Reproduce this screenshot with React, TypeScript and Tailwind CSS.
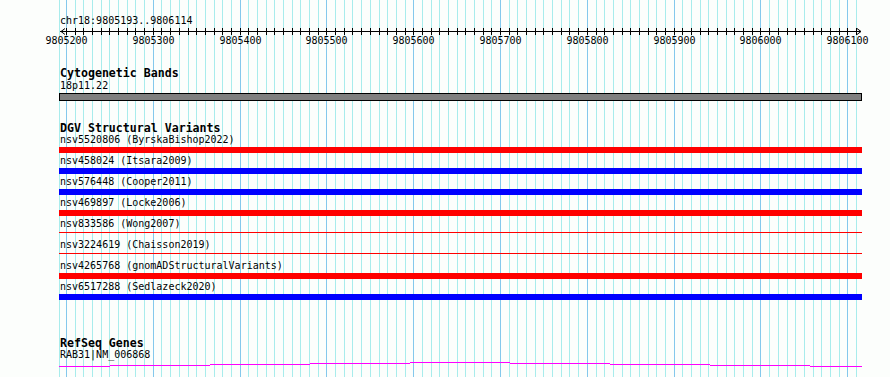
import React from "react";

// view: 9805193..9806114, 10bp grid starting at 9805200 (x=66)
const PX_PER_10BP = 8.681;
const ticks = Array.from({ length: 92 }, (_, k) => ({
  x: Math.round(66 + PX_PER_10BP * k),
  major: k % 10 === 0,
  label: k % 10 === 0 ? String(9805200 + k * 10) : null,
}));

type Variant = { id: string; study: string; color: "red" | "blue"; thin?: boolean };

const variants: Variant[] = [
  { id: "nsv5520806", study: "ByrskaBishop2022", color: "red" },
  { id: "nsv458024", study: "Itsara2009", color: "blue" },
  { id: "nsv576448", study: "Cooper2011", color: "blue" },
  { id: "nsv469897", study: "Locke2006", color: "red" },
  { id: "nsv833586", study: "Wong2007", color: "red", thin: true },
  { id: "nsv3224619", study: "Chaisson2019", color: "red", thin: true },
  { id: "nsv4265768", study: "gnomADStructuralVariants", color: "red" },
  { id: "nsv6517288", study: "Sedlazeck2020", color: "blue" },
];

// RAB31 staircase, [x1, x2, y] in gene svg coordinates
const geneSegments: [number, number, number][] = [
  [59, 110, 5],
  [110, 210, 4],
  [210, 310, 3],
  [310, 410, 2],
  [410, 510, 1],
  [510, 610, 2],
  [610, 710, 3],
  [710, 810, 4],
  [810, 862, 5],
];

const mono = "font-['DejaVu_Sans_Mono','Liberation_Mono',monospace]";

function TrackTitle({ children }: { children: React.ReactNode }) {
  return (
    <div className="h-[11px] pl-[60px] text-[11.6px] leading-[11px] font-bold whitespace-nowrap">
      {children}
    </div>
  );
}

function Label({ children }: { children: React.ReactNode }) {
  return (
    <div className="h-[12px] pl-[60px] text-[10px] leading-[12px] whitespace-nowrap">
      {children}
    </div>
  );
}

export default function App() {
  return (
    <div className={`relative w-[890px] h-[377px] overflow-hidden bg-[#fcfefc] text-black ${mono}`}>
      {/* grid lines */}
      <svg className="absolute inset-0" width={890} height={377}>
        <line x1={59.5} x2={59.5} y1={0} y2={377} stroke="#a8ecec" />
        {ticks.map((t) => (
          <line
            key={t.x}
            x1={t.x + 0.5}
            x2={t.x + 0.5}
            y1={0}
            y2={377}
            stroke={t.major ? "#84c8ec" : "#a8ecec"}
          />
        ))}
      </svg>

      <div className="relative flex flex-col pt-[16px]">
        <div className="h-[12px] pl-[60px] text-[10px] leading-[10px] whitespace-nowrap">
          chr18:9805193..9806114
        </div>

        {/* ruler */}
        <svg width={890} height={18} className="block">
          <line x1={60} x2={861} y1={3.5} y2={3.5} stroke="#000" />
          <polyline points="65,0.5 61,3.5 65,6.5" fill="none" stroke="#000" />
          <polyline points="857,0.5 861,3.5 857,6.5" fill="none" stroke="#000" />
          {ticks.map((t) => (
            <line key={t.x} x1={t.x + 0.5} x2={t.x + 0.5} y1={0} y2={7} stroke="#000" />
          ))}
          {ticks
            .filter((t) => t.label)
            .map((t) => (
              <text
                key={t.label}
                x={t.x + 0.5}
                y={16}
                textAnchor="middle"
                fontSize={10}
                fontFamily="'DejaVu Sans Mono', monospace"
                fill="#000"
              >
                {t.label}
              </text>
            ))}
        </svg>

        {/* Cytogenetic Bands */}
        <div className="mt-[22px]">
          <TrackTitle>Cytogenetic Bands</TrackTitle>
        </div>
        <div className="mt-[1px]">
          <Label>18p11.22</Label>
        </div>
        <div className="ml-[59px] mt-[1px] w-[803px] h-[8px] border border-black bg-[#808080]" />

        {/* DGV Structural Variants */}
        <div className="mt-[22px]">
          <TrackTitle>DGV Structural Variants</TrackTitle>
        </div>
        {variants.map((v) => (
          <div key={v.id} className="h-[21px]">
            <Label>
              {v.id} ({v.study})
            </Label>
            <div className="ml-[59px] mt-[1px] w-[803px] h-[6px]">
              {v.thin ? (
                <div className="mt-[2px] h-px bg-[#ff0000]" />
              ) : (
                <div className={v.color === "red" ? "h-full bg-[#ff0000]" : "h-full bg-[#0000ff]"} />
              )}
            </div>
          </div>
        ))}

        {/* RefSeq Genes */}
        <div className="mt-[36px]">
          <TrackTitle>RefSeq Genes</TrackTitle>
        </div>
        <Label>RAB31|NM_006868</Label>
        <svg width={890} height={7} className="block">
          {geneSegments.map(([x1, x2, y]) => (
            <rect key={x1} x={x1} y={y} width={x2 - x1} height={1} fill="#ff00ff" />
          ))}
        </svg>
      </div>
    </div>
  );
}
